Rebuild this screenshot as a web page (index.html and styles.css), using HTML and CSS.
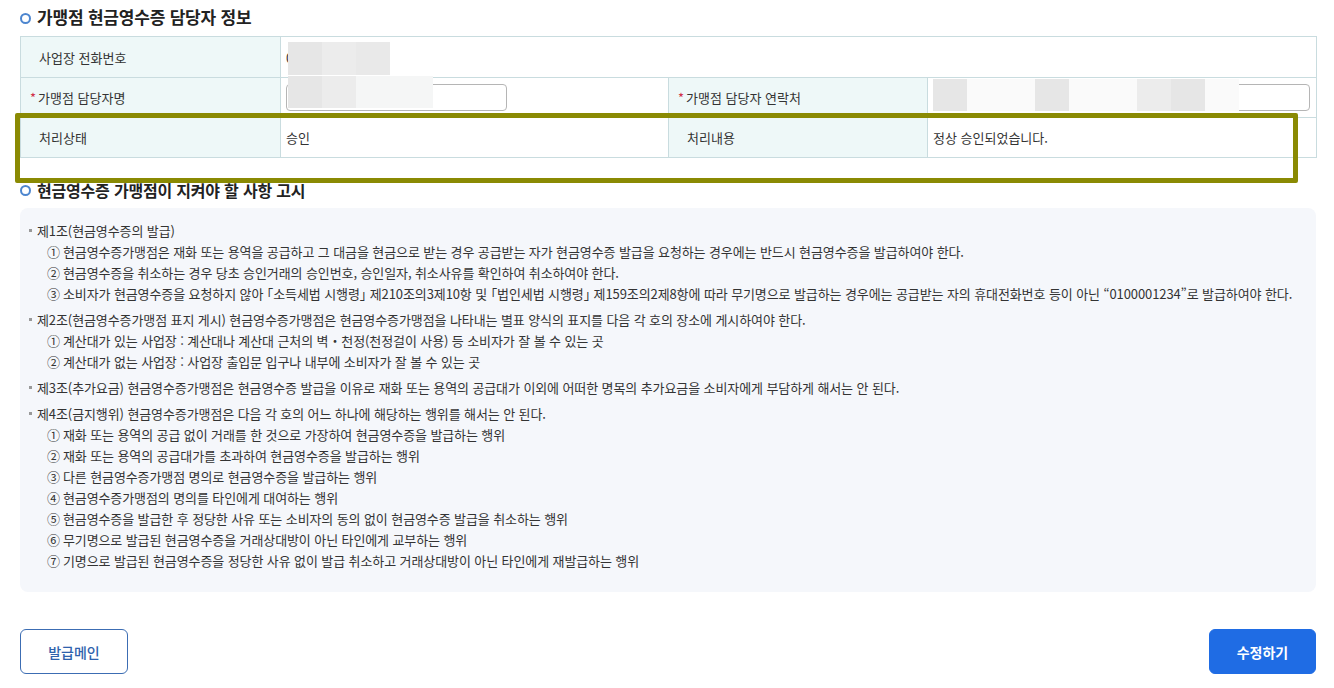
FILE: index.html
```html
<!DOCTYPE html>
<html lang="ko">
<head>
<meta charset="utf-8">
<title>가맹점 현금영수증 담당자 정보</title>
<link rel="stylesheet" href="styles.css">
</head>
<body>
<div class="page">
  <h2 class="sec-title">가맹점 현금영수증 담당자 정보</h2>
  <table class="info">
    <colgroup>
      <col class="c1"><col class="c2"><col class="c3"><col class="c4">
    </colgroup>
    <tr class="r1">
      <th>사업장 전화번호</th>
      <td colspan="3" class="masked"><span class="digit">0</span><span class="mask m-phone"><i class="s1"></i><i class="s2"></i><i class="s3"></i></span></td>
    </tr>
    <tr class="r2">
      <th class="req"><span class="star">*</span>가맹점 담당자명</th>
      <td class="masked"><span class="inp inp-name"></span><span class="mask m-name"><i class="s1"></i><i class="s2"></i><i class="s4"></i></span></td>
      <th class="req"><span class="star">*</span>가맹점 담당자 연락처</th>
      <td class="masked"><span class="inp inp-tel"></span><span class="mask m-tel"><i class="s1"></i><i class="s4"></i><i class="s4"></i><i class="s1"></i><i class="s4"></i><i class="s4"></i><i class="s2"></i><i class="s1"></i><i class="s4"></i></span></td>
    </tr>
    <tr class="r3">
      <th>처리상태</th>
      <td>승인</td>
      <th>처리내용</th>
      <td>정상 승인되었습니다.</td>
    </tr>
  </table>

  <h2 class="sec-title sec2">현금영수증 가맹점이 지켜야 할 사항 고시</h2>
  <div class="notice">
    <ul class="law">
      <li>
        <p class="art">제1조(현금영수증의 발급)</p>
        <p class="sub"><span class="no">①</span>현금영수증가맹점은 재화 또는 용역을 공급하고 그 대금을 현금으로 받는 경우 공급받는 자가 현금영수증 발급을 요청하는 경우에는 반드시 현금영수증을 발급하여야 한다.</p>
        <p class="sub"><span class="no">②</span>현금영수증을 취소하는 경우 당초 승인거래의 승인번호, 승인일자, 취소사유를 확인하여 취소하여야 한다.</p>
        <p class="sub"><span class="no">③</span>소비자가 현금영수증을 요청하지 않아 <span class="br">「</span>소득세법 시행령<span class="br">」</span> 제210조의3제10항 및 <span class="br">「</span>법인세법 시행령<span class="br">」</span> 제159조의2제8항에 따라 무기명으로 발급하는 경우에는 공급받는 자의 휴대전화번호 등이 아닌 “0100001234”로 발급하여야 한다.</p>
      </li>
      <li>
        <p class="art">제2조(현금영수증가맹점 표지 게시) 현금영수증가맹점은 현금영수증가맹점을 나타내는 별표 양식의 표지를 다음 각 호의 장소에 게시하여야 한다.</p>
        <p class="sub"><span class="no">①</span>계산대가 있는 사업장 : 계산대나 계산대 근처의 벽・천정(천정걸이 사용) 등 소비자가 잘 볼 수 있는 곳</p>
        <p class="sub"><span class="no">②</span>계산대가 없는 사업장 : 사업장 출입문 입구나 내부에 소비자가 잘 볼 수 있는 곳</p>
      </li>
      <li>
        <p class="art">제3조(추가요금) 현금영수증가맹점은 현금영수증 발급을 이유로 재화 또는 용역의 공급대가 이외에 어떠한 명목의 추가요금을 소비자에게 부담하게 해서는 안 된다.</p>
      </li>
      <li>
        <p class="art">제4조(금지행위) 현금영수증가맹점은 다음 각 호의 어느 하나에 해당하는 행위를 해서는 안 된다.</p>
        <p class="sub"><span class="no">①</span>재화 또는 용역의 공급 없이 거래를 한 것으로 가장하여 현금영수증을 발급하는 행위</p>
        <p class="sub"><span class="no">②</span>재화 또는 용역의 공급대가를 초과하여 현금영수증을 발급하는 행위</p>
        <p class="sub"><span class="no">③</span>다른 현금영수증가맹점 명의로 현금영수증을 발급하는 행위</p>
        <p class="sub"><span class="no">④</span>현금영수증가맹점의 명의를 타인에게 대여하는 행위</p>
        <p class="sub"><span class="no">⑤</span>현금영수증을 발급한 후 정당한 사유 또는 소비자의 동의 없이 현금영수증 발급을 취소하는 행위</p>
        <p class="sub"><span class="no">⑥</span>무기명으로 발급된 현금영수증을 거래상대방이 아닌 타인에게 교부하는 행위</p>
        <p class="sub"><span class="no">⑦</span>기명으로 발급된 현금영수증을 정당한 사유 없이 발급 취소하고 거래상대방이 아닌 타인에게 재발급하는 행위</p>
      </li>
    </ul>
  </div>

  <div class="actions">
    <button class="btn btn-line" type="button">발급메인</button>
    <button class="btn btn-primary" type="button">수정하기</button>
  </div>
</div>
<div class="highlight"></div>
</body>
</html>
```

FILE: styles.css
```css
* { box-sizing: border-box; }
html, body { margin: 0; padding: 0; background: #fff; }
body {
  font-family: "Noto Sans CJK KR", "Noto Sans", sans-serif;
  color: #333;
  width: 1334px;
  height: 688px;
  overflow: hidden;
  position: relative;
}
.page {
  padding: 5px 18px 0 20px;
}
.sec-title {
  margin: 0;
  font-size: 17px;
  font-weight: 700;
  color: #222;
  line-height: 24px;
  padding-left: 17px;
  position: relative;
  letter-spacing: -0.2px;
}
.sec-title::before {
  content: "";
  position: absolute;
  left: 0;
  top: 8px;
  width: 7px;
  height: 7px;
  border: 2px solid #4d86cf;
  border-radius: 50%;
}
.sec2 {
  font-size: 16px;
  margin-top: 20px;
}
.sec2::before { top: 7px; }

.info {
  margin-top: 7px;
  width: 1296px;
  border-collapse: collapse;
  table-layout: fixed;
  font-size: 13px;
}
.info col.c1 { width: 260px; }
.info col.c2 { width: 388px; }
.info col.c3 { width: 259px; }
.info col.c4 { width: 389px; }
.info th, .info td {
  border: 1px solid #c9dcdf;
  height: 40px;
  padding: 0 5px;
  text-align: left;
  vertical-align: middle;
  font-weight: 400;
  color: #333;
}
.info th {
  background: #eef8f8;
  padding-left: 18px;
}
.info th.req { padding-left: 9px; }
.info .r1 th, .info .r1 td { height: 41px; }
.star { color: #d0304a; margin-right: 2px; }
.masked { position: relative; }
.digit { color: #333; }
.inp {
  display: block;
  height: 27px;
  border: 1px solid #b5b5b5;
  border-radius: 4px;
  background: #fff;
}
.inp-name { width: 221px; }
.inp-tel { width: 377px; }
.mask {
  position: absolute;
  display: flex;
}
.mask i { display: block; height: 100%; }
.mask .s1 { width: 34px; background: #e6e6e6; }
.mask .s2 { width: 34px; background: #ececec; }
.mask .s3 { width: 34px; background: #e9e9e9; }
.mask .s4 { width: 34px; background: #f5f6f6; }
.m-phone { left: 7px; top: 5px; height: 33px; }
.m-name { left: 7px; top: -2px; height: 32px; }
.m-name .s4 { width: 77px; }
.m-tel { left: 5px; top: 1px; height: 32px; }
.m-tel i { width: 34px; }
.m-tel .s4 { background: #fafafa; }

.notice {
  margin-top: 6px;
  background: #f5f7fb;
  border-radius: 8px;
  height: 384px;
  padding: 12px 10px 0 8px;
  font-size: 13px;
  color: #333;
}
.law { list-style: none; margin: 0; padding: 0; }
.law li { margin-bottom: 5px; }
.law p { margin: 0; line-height: 21px; white-space: nowrap; letter-spacing: -0.1px; }
.art { position: relative; padding-left: 9px; }
.art::before {
  content: "";
  position: absolute;
  left: 1px;
  top: 9px;
  width: 3px;
  height: 3px;
  background: #999;
}
.sub { padding-left: 19px; letter-spacing: -0.14px; }
.no { margin-right: 3px; }
.br { font-feature-settings: "halt" 1; }

.actions {
  margin-top: 37px;
  display: flex;
  justify-content: space-between;
}
.btn {
  height: 45px;
  width: 108px;
  border-radius: 6px;
  font-family: inherit;
  font-size: 14px;
  cursor: pointer;
}
.btn-line {
  background: #fff;
  border: 1px solid #3c6db3;
  color: #2f62ad;
  font-weight: 500;
}
.btn-primary {
  background: #1f6ce4;
  border: 1px solid #1f6ce4;
  color: #fff;
  font-weight: 700;
  width: 107px;
}

.highlight {
  position: absolute;
  left: 15px;
  top: 113px;
  width: 1283px;
  height: 70px;
  border: 5px solid #8a8a03;
  border-radius: 2px;
  pointer-events: none;
}
```
